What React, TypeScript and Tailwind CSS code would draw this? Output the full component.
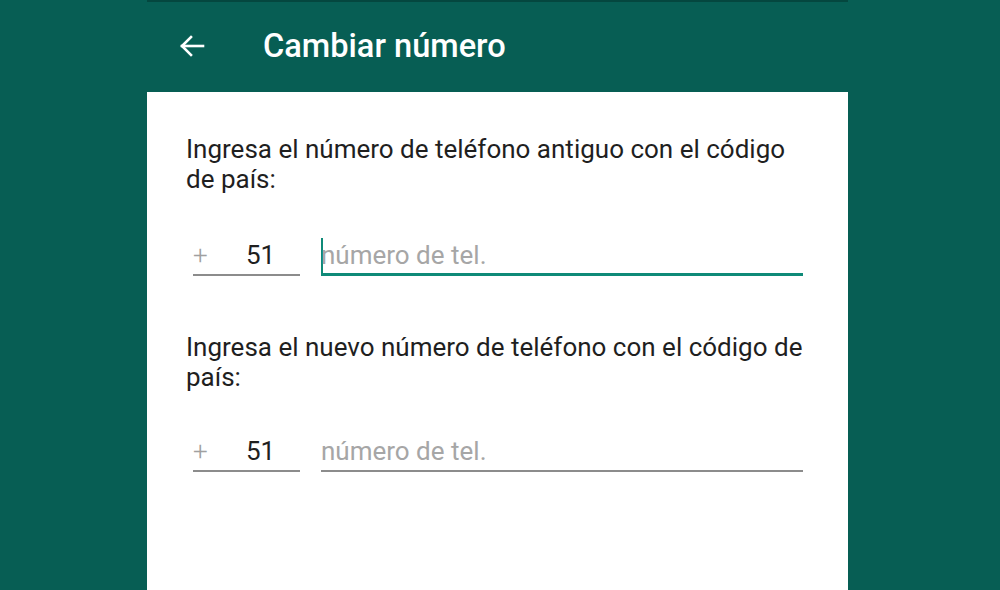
import { useState } from 'react'

function BackArrow() {
  return (
    <svg width="26" height="22" viewBox="0 0 26 22" fill="none" stroke="white" strokeWidth="2.6" strokeLinecap="square">
      <path d="M3 11H24" />
      <path d="M12 2L3 11L12 20" />
    </svg>
  )
}

function PhoneRow({ active }: { active?: boolean }) {
  const [value, setValue] = useState('')
  return (
    <div className="flex items-end">
      <div className="w-[107px] flex items-center border-b-2 border-[#8c8c8c] pb-[3px] leading-[32px]">
        <span className="w-[53px] text-[#a0a0a0] text-[26px] font-light">+</span>
        <span className="text-[#1f1f1f] text-[26px]">51</span>
      </div>
      <div
        className={
          active
            ? 'ml-[21px] w-[482px] flex items-end border-b-[3px] border-[#0f8a78]'
            : 'ml-[21px] w-[482px] flex items-end border-b-2 border-[#8c8c8c] pb-[3px]'
        }
      >
        {active && <span className="w-[2px] h-[35px] bg-[#0f8a78] -mr-[2px] shrink-0" />}
        <input
          value={value}
          onChange={(e) => setValue(e.target.value)}
          placeholder="número de tel."
          className={
            active
              ? 'w-full bg-transparent outline-none text-[26px] leading-[32px] h-[32px] mb-[2px] text-[#1f1f1f] placeholder:text-[#a6a6a6]'
              : 'w-full bg-transparent outline-none text-[26px] leading-[32px] h-[32px] text-[#1f1f1f] placeholder:text-[#a6a6a6]'
          }
        />
      </div>
    </div>
  )
}

export default function App() {
  return (
    <div className="w-full h-[590px] bg-[#075e54] flex overflow-hidden font-['Roboto',sans-serif]">
      <div className="ml-[147px] w-[701px] flex flex-col">
        <div className="h-[92px] border-t-2 border-[#04473f] flex items-center shrink-0">
          <div className="ml-[32px] mt-[-2px]">
            <BackArrow />
          </div>
          <h1 className="ml-[58px] text-white text-[32.6px] font-medium mt-[-2px]">Cambiar número</h1>
        </div>
        <div className="flex-1 bg-white pl-[39px] pr-[40px] pt-[42px]">
          <p className="text-[26px] leading-[30px] text-[#1f1f1f]">
            Ingresa el número de teléfono antiguo con el código de país:
          </p>
          <div className="mt-[44px] pl-[7px]">
            <PhoneRow active />
          </div>
          <p className="mt-[56px] text-[26px] leading-[30px] text-[#1f1f1f]">
            Ingresa el nuevo número de teléfono con el código de país:
          </p>
          <div className="mt-[43px] pl-[7px]">
            <PhoneRow />
          </div>
        </div>
      </div>
    </div>
  )
}
